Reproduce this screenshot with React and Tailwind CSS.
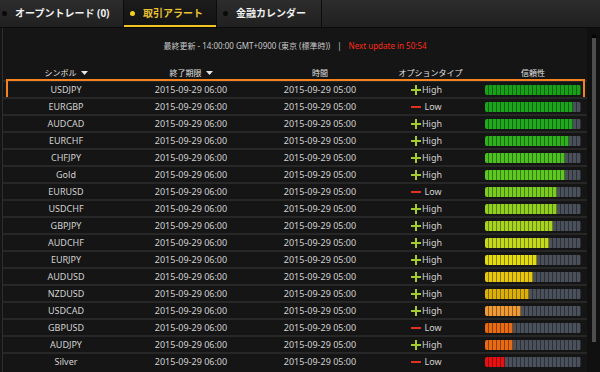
import React from 'react';

const rows = [
  ['USDJPY', 'H', 24, 'bg-[#18a018]'],
  ['EURGBP', 'L', 22, 'bg-[#1ca41c]'],
  ['AUDCAD', 'H', 22, 'bg-[#22a81e]'],
  ['EURCHF', 'H', 21, 'bg-[#30b01e]'],
  ['CHFJPY', 'H', 20, 'bg-[#4cc020]'],
  ['Gold', 'H', 20, 'bg-[#5cc820]'],
  ['EURUSD', 'L', 18, 'bg-[#7acc20]'],
  ['USDCHF', 'H', 18, 'bg-[#92d020]'],
  ['GBPJPY', 'H', 17, 'bg-[#a8d41e]'],
  ['AUDCHF', 'H', 16, 'bg-[#c4d81c]'],
  ['EURJPY', 'H', 13, 'bg-[#e4dc10]'],
  ['AUDUSD', 'H', 12, 'bg-[#e8c80e]'],
  ['NZDUSD', 'H', 11, 'bg-[#dcb00a]'],
  ['USDCAD', 'H', 9, 'bg-[#f09a36]'],
  ['GBPUSD', 'L', 7, 'bg-[#e86a12]'],
  ['AUDJPY', 'H', 7, 'bg-[#e86a12]'],
  ['Silver', 'L', 5, 'bg-[#e81010]'],
];

function Bar({ n, c }) {
  return (
    <div className="flex h-[10px] w-[96px] overflow-hidden rounded-[2px]">
      {Array.from({ length: 24 }).map((_, i) => (
        <div
          key={i}
          className={`h-full w-[4px] shrink-0 border-r border-black/40 ${i < n ? c : 'bg-[#4b515b]'}`}
        />
      ))}
    </div>
  );
}

function Plus() {
  return (
    <svg width="10" height="10" viewBox="0 0 10 10">
      <path d="M0 5H10M5 0V10" stroke="#a4cc2c" strokeWidth="2" />
    </svg>
  );
}

function Minus() {
  return (
    <svg width="10" height="10" viewBox="0 0 10 10">
      <path d="M0 5H10" stroke="#e0301e" strokeWidth="2" />
    </svg>
  );
}

function SortArrow() {
  return (
    <svg width="7" height="4" viewBox="0 0 7 4" className="ml-[4px]">
      <path d="M0 0H7L3.5 4Z" fill="#e6e6e6" />
    </svg>
  );
}

function Tab({ label, active, w, pl }) {
  return (
    <div
      className={`relative flex h-full items-center border-r border-[#0c0c0c] ${w} ${pl} ${
        active ? 'bg-linear-to-b from-[#1c1c1c] to-[#121212]' : ''
      }`}
    >
      <div className={`h-[5px] w-[5px] rounded-full ${active ? 'bg-[#f2d21e]' : 'bg-[#0a0a0a]'}`} />
      <span
        className={`ml-[8px] text-[10px] font-bold ${active ? 'text-[#e9c232]' : 'text-[#f0f0f0]'}`}
      >
        {label}
      </span>
      {active && <div className="absolute bottom-0 left-0 right-0 h-[2px] bg-[#f0c420]" />}
    </div>
  );
}

export default function App() {
  return (
    <div
      className="flex h-[372px] w-[600px] flex-col overflow-hidden bg-[#151515]"
      style={{ fontFamily: '"Noto Sans", "Noto Sans CJK JP", sans-serif' }}
    >
      <div className="flex h-[28px] shrink-0 border-b border-[#0b0b0b] bg-linear-to-b from-[#2d2d2d] to-[#202020]">
        <Tab label="オープントレード (0)" w="w-[124px]" pl="pl-[2px]" />
        <Tab label="取引アラート" active w="w-[93px]" pl="pl-[6px]" />
        <Tab label="金融カレンダー" w="w-[105px]" pl="pl-[6px]" />
      </div>

      <div className="flex flex-1">
        <div className="ml-[2px] w-[585px] border-l border-[#2e2e2e]">
          <div className="mt-[11px] flex h-[14px] items-center justify-center text-[8px] leading-none">
            <span className="text-[#c8c8c8]">最終更新 - 14:00:00 GMT+0900 (東京 (標準時))</span>
            <span className="mx-[7px] text-[#c8c8c8]">|</span>
            <span className="text-[#ff2a1a]">Next update in 50:54</span>
          </div>

          <div className="mt-[13px] grid h-[14px] grid-cols-[126px_124px_134px_79px_1fr] items-center text-[8px] leading-none text-[#e2e2e2]">
            <div className="flex items-center justify-center">
              シンボル
              <SortArrow />
            </div>
            <div className="flex items-center justify-center">
              終了期限
              <SortArrow />
            </div>
            <div className="text-center">時間</div>
            <div className="pl-[8px] text-center">オプションタイプ</div>
            <div className="pl-[19px]">
              <div className="w-[96px] text-center">信頼性</div>
            </div>
          </div>

          <div>
            {rows.map(([sym, t, n, c], idx) => (
              <div
                key={sym}
                className="relative grid h-[17px] grid-cols-[126px_124px_134px_79px_1fr] items-center border-t-2 border-[#272727] text-[9px] leading-none text-[#d2d2d2]"
              >
                <div className="text-center">{sym}</div>
                <div className="text-center">2015-09-29 06:00</div>
                <div className="text-center">2015-09-29 05:00</div>
                <div className="flex items-center justify-center gap-[1px]">
                  {t === 'H' ? <Plus /> : <Minus />}
                  <span className={t === 'H' ? '' : 'ml-[2px]'}>{t === 'H' ? 'High' : 'Low'}</span>
                </div>
                <div className="pl-[19px]">
                  <Bar n={n} c={c} />
                </div>
                {idx === 0 && (
                  <div className="absolute -top-[3px] -bottom-[2px] left-[3px] right-[2px] border-2 border-[#f5821f]" />
                )}
              </div>
            ))}
          </div>
        </div>

        <div className="flex w-[13px] flex-col items-center bg-[#101010]">
          <svg width="6" height="5" viewBox="0 0 6 5" className="mt-[5px]">
            <path d="M0 5L3 0L6 5Z" fill="#050505" />
          </svg>
          <div className="h-[304px] w-[4px] bg-[#4e4e4e]" />
        </div>
      </div>
    </div>
  );
}
